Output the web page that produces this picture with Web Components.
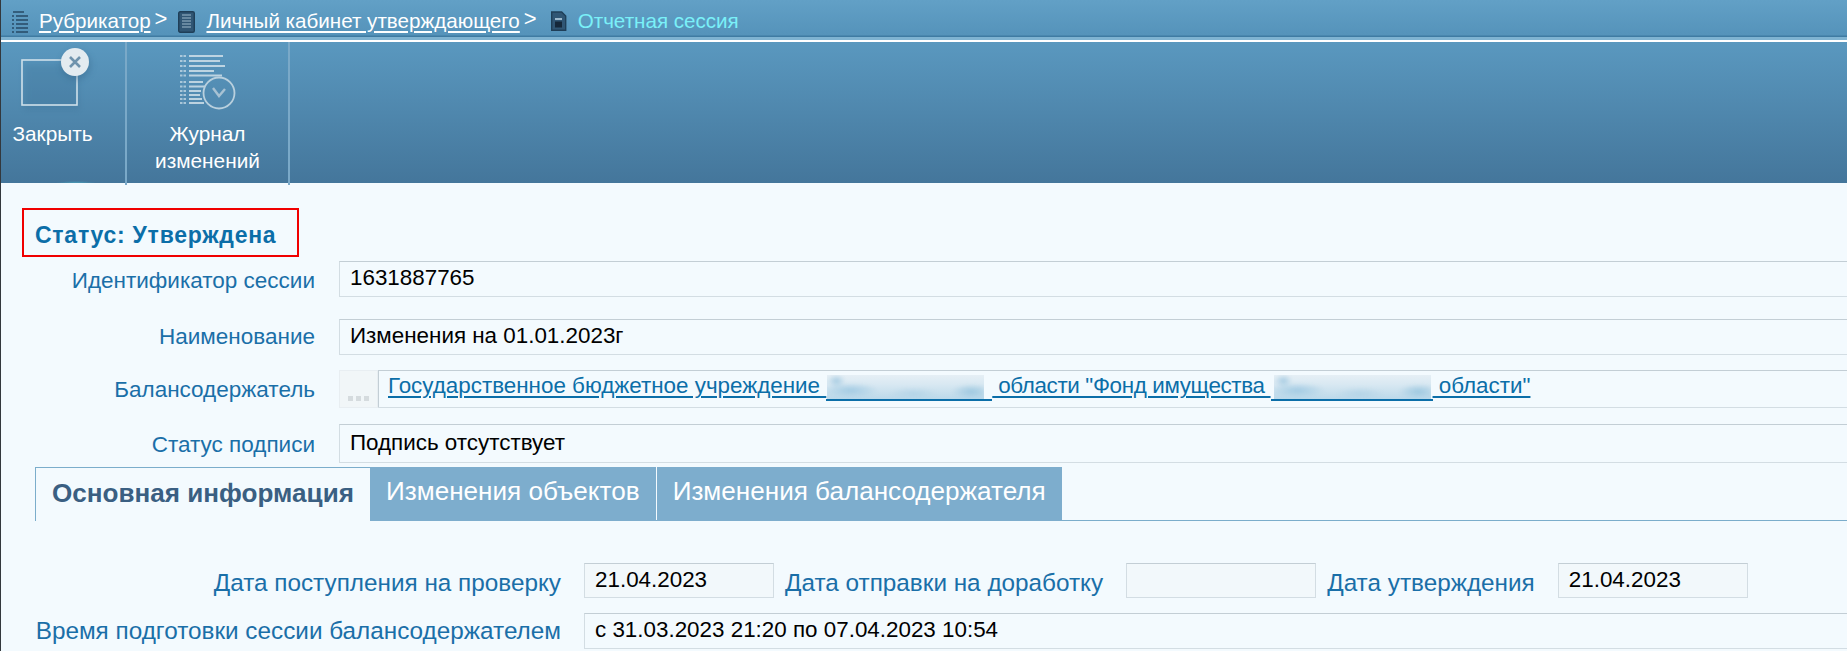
<!DOCTYPE html>
<html lang="ru">
<head>
<meta charset="utf-8">
<title>Отчетная сессия</title>
<style>
  html, body { margin: 0; padding: 0; height: 100%; overflow: hidden; background: #f3fafe; }
  body { font-family: "Liberation Sans", Arial, sans-serif; }
</style>
</head>
<body>
<session-page></session-page>
<script>
  const define = (name, css, html) => {
    const template = document.createElement('template')
    template.innerHTML = `<style>${css}</style>${html}`
    customElements.define(name, class extends HTMLElement {
      constructor () {
        super()
        this.attachShadow({ mode: 'open' })
        this.shadowRoot.appendChild(template.content.cloneNode(true))
      }
    })
  }

  // верхняя строка с хлебными крошками
  define('crumb-bar', `
    :host { display: block; height: 42px; box-sizing: border-box; background: linear-gradient(#62a0c6, #5593ba 35px, #3f7ba2 36px, #3f7ba2 37px, #7fb3d1 37px, #7fb3d1 40px, #fff 40px, #fff 42px); }
    div { display: flex; align-items: center; height: 41px; padding-left: 10px; font-size: 20.6px; color: #fff; }
  `, `<div><slot></slot></div>`)

  define('crumb-item', `
    :host { display: inline-flex; align-items: center; white-space: nowrap; }
    a { color: #fff; text-decoration: underline; text-decoration-thickness: 2px; text-underline-offset: 3px; margin-left: 11px; }
    span { margin: -4px 0 0 4px; font-size: 22px; }
    :host([current]) a { color: #7af0f8; text-decoration: none; margin-left: 11px; }
    :host([current]) span { display: none; }
    ::slotted(svg) { display: block; margin-top: 2px; }
  `, `<slot name="icon"></slot><a><slot></slot></a><span>&gt;</span>`)

  // панель кнопок
  define('tool-bar', `
    :host { display: flex; height: 141px; background: linear-gradient(#5a98bf, #44769b); position: relative; }
    :host::after { content: ""; position: absolute; left: 55px; width: 40px; bottom: 0; height: 2px; opacity: .5; background: radial-gradient(ellipse at bottom, #4fc3d5, transparent 70%); }
  `, `<slot></slot>`)

  define('tool-button', `
    :host { display: flex; flex-direction: column; align-items: center; box-sizing: border-box; height: 143px; border-right: 2px solid #7aa9c8; color: #fff; font-size: 20.8px; line-height: 27px; text-align: center; }
    .icon { height: 78px; }
    .text { margin-right: var(--text-shift, 0); }
    ::slotted(svg) { display: block; }
  `, `<div class="icon"><slot name="icon"></slot></div><div class="text"><slot></slot></div>`)

  // красная рамка статуса
  define('status-badge', `
    :host { display: block; width: 277px; height: 49px; box-sizing: border-box; border: 2px solid #f00000; margin-left: 21px; padding: 12px 0 0 11px; color: #0b6ea8; font-size: 23px; font-weight: bold; letter-spacing: .75px; line-height: 26px; }
  `, `<slot></slot>`)

  define('form-row', `
    :host { display: flex; align-items: flex-start; }
    .label { flex: none; width: var(--label-width, 314px); box-sizing: border-box; margin-right: var(--label-gap, 24px); text-align: right; color: #1a6fa8; font-size: var(--label-size, 22.5px); line-height: 26px; padding-top: var(--label-top, 5px); white-space: nowrap; }
    .fields { flex: 1; min-width: 0; display: flex; align-items: flex-start; }
  `, `<div class="label"><slot name="label"></slot></div><div class="fields"><slot></slot></div>`)

  define('value-box', `
    :host { display: block; flex: 1; box-sizing: border-box; height: var(--box-height, 36px); padding: var(--box-top, 3px) 0 0 10px; border: 1px solid #d3dde3; border-top-color: #c3ced5; border-right: 0; color: #000; font-size: 22.4px; line-height: 26px; white-space: nowrap; }
    :host([short]) { flex: none; width: 190px; border-right: 1px solid #d3dde3; background: #f2f8fb; }
  `, `<slot></slot>`)

  // строка балансодержателя с кнопкой выбора
  define('picker-box', `
    :host { display: flex; flex: 1; height: 38px; box-sizing: border-box; border-top: 1px solid #c3ced5; border-bottom: 1px solid #d3dde3; }
    .pick { flex: none; width: 39px; box-sizing: border-box; margin-top: -1px; margin-bottom: -1px; border: 1px solid #e8eef2; background: #f1f6f8; display: flex; align-items: flex-end; justify-content: center; gap: 3px; padding-bottom: 6px; }
    .pick i { width: 5px; height: 5px; background: #d5dbde; }
    .link { flex: 1; padding: 1px 0 0 9px; border-left: 1px solid #c3ced5; color: #0b6ea8; font-size: 22.4px; line-height: 28px; white-space: nowrap; text-decoration: underline; text-decoration-thickness: 2px; text-underline-offset: 3px; }
  `, `<div class="pick"><i></i><i></i><i></i></div><div class="link"><slot></slot></div>`)

  // размытое название области, подчеркивание остается под ним
  define('blur-patch', `
    :host { display: inline-block; height: 26px; vertical-align: -6px; border-bottom: 2px solid #0b6ea8; box-sizing: border-box; }
    .box { width: 157px; height: 24px; overflow: hidden; background: linear-gradient(#e6eff5, #d8e8f2 40%, #bcd9ea); }
    .spots { height: 100%; background: radial-gradient(ellipse 28px 8px at 15% 65%, #a3cbe3, transparent), radial-gradient(ellipse 24px 7px at 55% 80%, #b4d4e7, transparent), radial-gradient(ellipse 20px 8px at 92% 70%, #9ec8e0, transparent), radial-gradient(ellipse 9px 7px at 6% 25%, #a9cde3, transparent); filter: blur(1.5px); }
  `, `<div class="box"><div class="spots"></div></div>`)

  define('tab-bar', `
    :host { display: flex; height: 54px; margin-left: 34px; box-sizing: border-box; border-bottom: 1px solid #7badcb; }
  `, `<slot></slot>`)

  define('tab-item', `
    :host { display: block; box-sizing: border-box; height: 54px; padding: 0 16px; margin-right: 1px; background: #7dadcd; color: #fff; font-size: 26.1px; line-height: 49px; white-space: nowrap; }
    :host([active]) { background: #f3fafe; color: #3a5f82; font-weight: bold; border: 1px solid #7badcb; border-width: 1px 0 0 1px; margin-right: 0; width: 335px; padding: 0 0 0 16px; line-height: 50px; }
  `, `<slot></slot>`)

  define('session-page', `
    :host { display: block; height: 651px; border-left: 1px solid #33383d; box-sizing: border-box; overflow: hidden; }
    main { display: block; padding-top: 25px; }
    form-row { margin-top: 4px; }
    .r1 { --label-top: 7px; }
    .r2 { margin-top: 22px; --label-top: 5px; }
    .r3 { margin-top: 15px; --label-top: 7px; }
    .r4 { margin-top: 16px; --box-height: 39px; --box-top: 5px; --label-top: 8px; }
    tab-bar { margin-top: 4px; }
    .dates { margin-top: 42px; --label-width: 583px; --label-gap: 0px; --box-height: 35px; --label-size: 24.3px; --label-top: 7px; }
    .dates .mid { flex: none; margin: 7px 23px 0 11px; color: #1a6fa8; font-size: 24.3px; line-height: 26px; white-space: nowrap; }
    .time { margin-top: 15px; --label-width: 583px; --label-gap: 0px; --box-height: 36px; --label-size: 24.3px; --label-top: 5px; }
    .lbl { padding-right: 23px; display: block; }
    .tight { letter-spacing: -.35px; }
    .p1 { padding: 0 8px 0 1px; }
    .p2 { padding: 0 2px 0 3px; }
  `, `
    <crumb-bar>
      <crumb-item>
        <svg slot="icon" width="17" height="22" viewBox="0 0 17 22" fill="none" stroke="#274a65" stroke-width="1.6"><path d="M1 5h2M1 9h2M1 13h2M1 17h2M1 21h2"/><path d="M2 1h11M5 5h12M5 9h12M5 13h12M5 17h12M5 21h12"/></svg>
        Рубрикатор
      </crumb-item>
      <crumb-item style="margin-left:11px">
        <svg slot="icon" width="17" height="22" viewBox="0 0 17 22"><rect x=".7" y=".7" width="15.6" height="20.6" rx="1.5" fill="#305674" stroke="#1f3f58" stroke-width="1.4"/><path d="M4 4h9M4 7h9M4 10h9M4 13h9M4 16h9" stroke="#9db9cc" stroke-width="1.2"/></svg>
        Личный кабинет утверждающего
      </crumb-item>
      <crumb-item current style="margin-left:13px">
        <svg slot="icon" width="17" height="21" viewBox="0 0 17 21"><path d="M1.7 1h10l4 4v14.3H1.7z" fill="#305674" stroke="#1f3f58" stroke-width="1.4"/><rect x="5" y="7" width="7" height="2" fill="#9db9cc"/><rect x="5" y="10.5" width="7" height="6" fill="#15283a"/></svg>
        Отчетная сессия
      </crumb-item>
    </crumb-bar>
    <tool-bar>
      <tool-button style="width:126px;--text-shift:21px">
        <svg slot="icon" width="124" height="77" viewBox="1 0 124 77" fill="none">
          <defs><filter id="sh" x="-30%" y="-30%" width="160%" height="160%"><feGaussianBlur stdDeviation="3"/></filter></defs>
          <rect x="24" y="22" width="55" height="46" fill="#2e5f83" opacity=".18" filter="url(#sh)"/>
          <rect x="22" y="18" width="55" height="45" stroke="#cfe0ea" stroke-width="1.6"/>
          <circle cx="76" cy="23" r="15" fill="#2e5f83" opacity=".35" filter="url(#sh)"/>
          <circle cx="75" cy="20" r="14" fill="#e3ebf0"/>
          <path d="M70 15l10 10M80 15l-10 10" stroke="#6f93ad" stroke-width="2.6"/>
        </svg>
        Закрыть
      </tool-button>
      <tool-button style="width:163px">
        <svg slot="icon" width="161" height="77" viewBox="0 0 161 77" fill="none" stroke="#cfdfe9" stroke-width="2">
          <path d="M53 14h6M53 19h6M53 24h6M53 29h6M53 33.5h6M53 40h6M53 44.5h6M53 49h6M53 53h6M53 57h6M53 61h6" stroke-dasharray="2.5 1" opacity=".7"/>
          <path d="M62 14h34M62 19h31M62 24h36M62 29h25M62 33.5h33M62 40h14M62 44.5h16M62 49h12M62 53h11M62 57h13M62 61h15" stroke-width="1.8" opacity=".85"/>
          <circle cx="92" cy="51" r="15.5" stroke="#b9d0de" stroke-width="1.8"/>
          <path d="M86 46l6 8 6-7" stroke="#a8c2d3" stroke-width="2.4"/>
        </svg>
        Журнал<br>изменений
      </tool-button>
    </tool-bar>
    <main>
      <status-badge>Статус: Утверждена</status-badge>
      <form-row class="r1"><span slot="label">Идентификатор сессии</span><value-box>1631887765</value-box></form-row>
      <form-row class="r2"><span slot="label">Наименование</span><value-box>Изменения на 01.01.2023г</value-box></form-row>
      <form-row class="r3"><span slot="label">Балансодержатель</span><picker-box>Государственное бюджетное учреждение <blur-patch class="p1"></blur-patch><span class="tight"> области "Фонд имущества </span><blur-patch class="p2"></blur-patch> области"</picker-box></form-row>
      <form-row class="r4"><span slot="label">Статус подписи</span><value-box>Подпись отсутствует</value-box></form-row>
      <tab-bar>
        <tab-item active>Основная информация</tab-item>
        <tab-item>Изменения объектов</tab-item>
        <tab-item>Изменения балансодержателя</tab-item>
      </tab-bar>
      <form-row class="dates"><span slot="label" class="lbl">Дата поступления на проверку</span>
        <value-box short>21.04.2023</value-box><span class="mid">Дата отправки на доработку</span>
        <value-box short></value-box><span class="mid">Дата утверждения</span>
        <value-box short>21.04.2023</value-box>
      </form-row>
      <form-row class="time"><span slot="label" class="lbl">Время подготовки сессии балансодержателем</span><value-box>с 31.03.2023 21:20 по 07.04.2023 10:54</value-box></form-row>
    </main>
  `)
</script>
</body>
</html>
